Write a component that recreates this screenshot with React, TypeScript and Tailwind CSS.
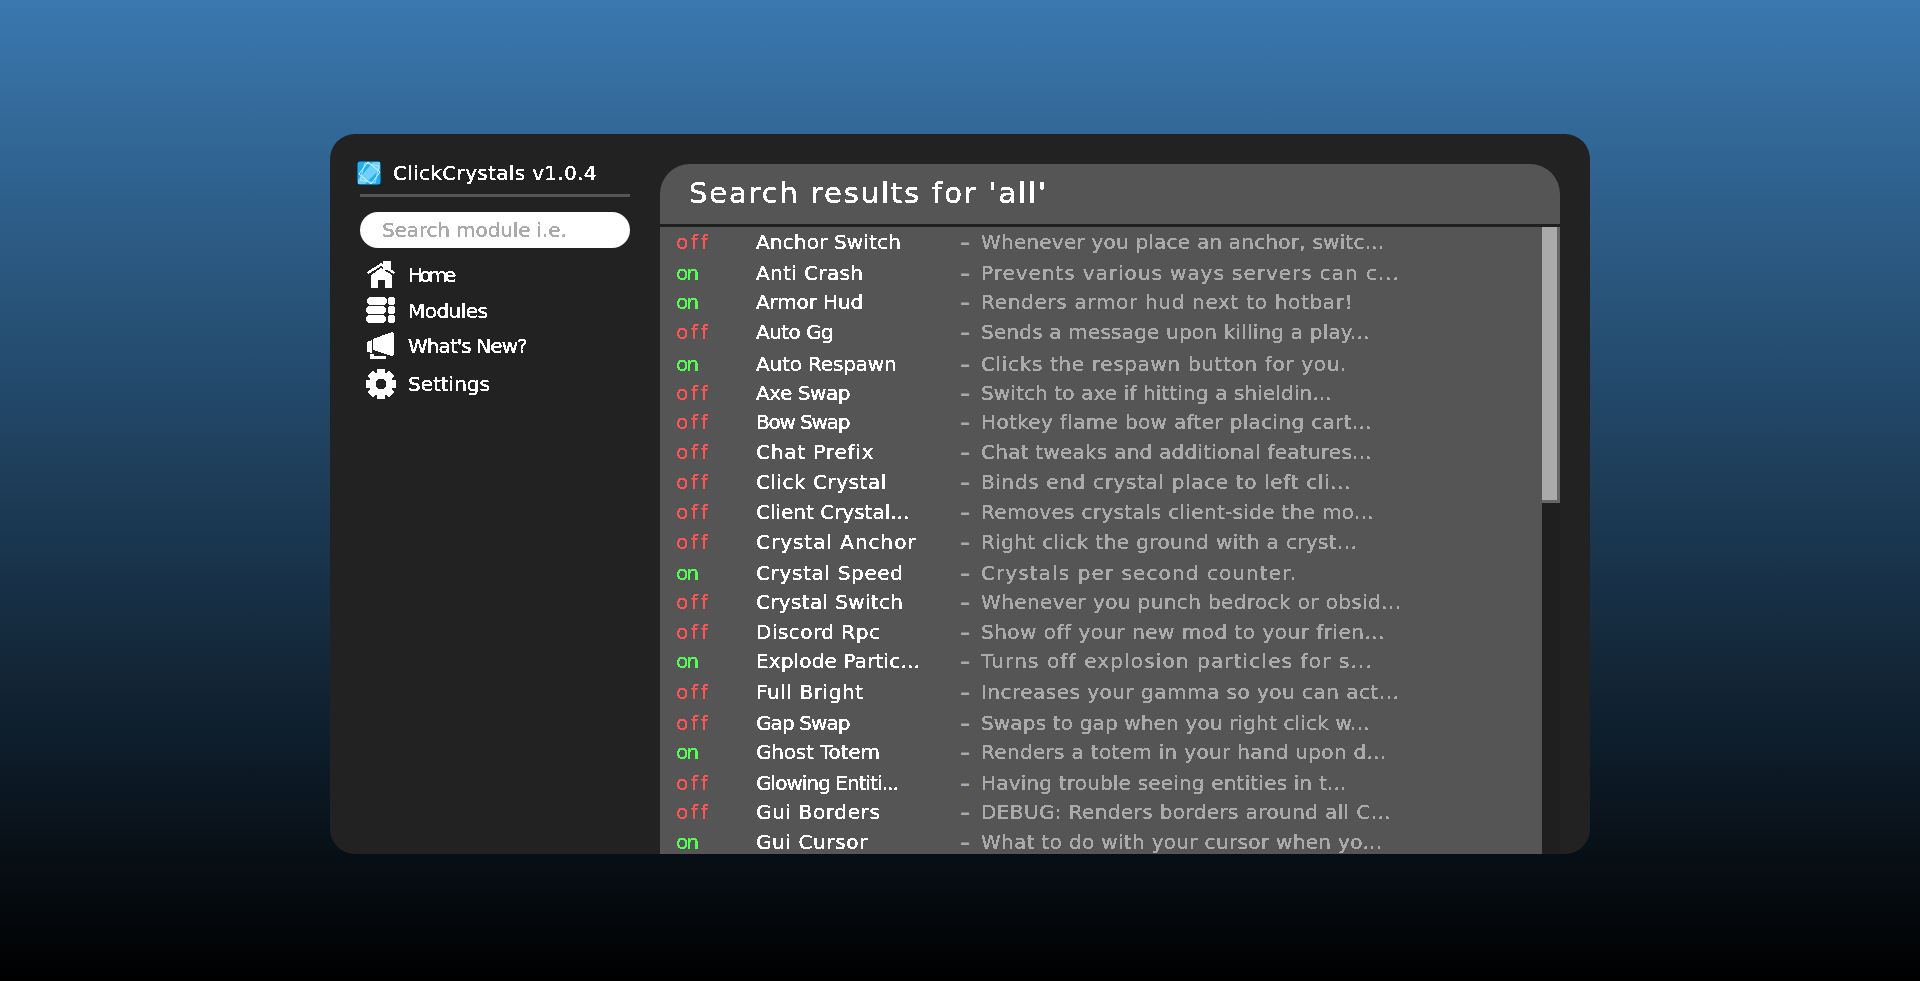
import React from "react";

const ctx = document.createElement("canvas").getContext("2d") as CanvasRenderingContext2D;

function advance(s: string) {
  let sum = 0;
  for (const c of s) {
    if ("i!.,:'".includes(c)) sum += 2;
    else if (c === "l") sum += 3;
    else if ("It ".includes(c)) sum += 4;
    else if ("fk".includes(c)) sum += 5;
    else sum += 6;
  }
  return sum;
}

function T({ s, size, scale, className }: { s: string; size: number; scale: number; className: string }) {
  ctx.font = `${size}px "DejaVu Sans"`;
  const measured = ctx.measureText(s).width;
  const target = (advance(s) - 1) * scale;
  const spacing = (target - measured) / Math.max(s.length - 1, 1);
  return (
    <span
      className={`block whitespace-pre [filter:url(#crisp)] ${className}`}
      style={{ letterSpacing: `${spacing}px` }}
    >
      {s}
    </span>
  );
}

const heightClass: Record<number, string> = {
  27: "h-[27px]",
  29: "h-[29px]",
  30: "h-[30px]",
  31: "h-[31px]",
  32: "h-[32px]",
};

const rows: [boolean, string, string, number][] = [
  [false, "Anchor Switch", "Whenever you place an anchor, switc...", 27],
  [true, "Anti Crash", "Prevents various ways servers can c...", 31],
  [true, "Armor Hud", "Renders armor hud next to hotbar!", 29],
  [false, "Auto Gg", "Sends a message upon killing a play...", 30],
  [true, "Auto Respawn", "Clicks the respawn button for you.", 32],
  [false, "Axe Swap", "Switch to axe if hitting a shieldin...", 29],
  [false, "Bow Swap", "Hotkey flame bow after placing cart...", 29],
  [false, "Chat Prefix", "Chat tweaks and additional features...", 30],
  [false, "Click Crystal", "Binds end crystal place to left cli...", 30],
  [false, "Client Crystal...", "Removes crystals client-side the mo...", 30],
  [false, "Crystal Anchor", "Right click the ground with a cryst...", 30],
  [true, "Crystal Speed", "Crystals per second counter.", 31],
  [false, "Crystal Switch", "Whenever you punch bedrock or obsid...", 29],
  [false, "Discord Rpc", "Show off your new mod to your frien...", 30],
  [true, "Explode Partic...", "Turns off explosion particles for s...", 29],
  [false, "Full Bright", "Increases your gamma so you can act...", 31],
  [false, "Gap Swap", "Swaps to gap when you right click w...", 31],
  [true, "Ghost Totem", "Renders a totem in your hand upon d...", 29],
  [false, "Glowing Entiti...", "Having trouble seeing entities in t...", 31],
  [false, "Gui Borders", "DEBUG: Renders borders around all C...", 29],
  [true, "Gui Cursor", "What to do with your cursor when yo...", 30],
];

function Logo() {
  return (
    <svg width="26" height="26" viewBox="0 0 26 26" className="shrink-0">
      <rect x="0.5" y="0.5" width="25" height="25" rx="3" fill="#0b2a3a" />
      <rect x="1.5" y="1.5" width="23" height="23" rx="2.5" fill="#22aef2" />
      <path d="M17 2 L24 2 L24 9 L9 24 L2 24 L2 20 Z" fill="#6fd0fb" />
      <path d="M12 2 L24 12 L15 24 L3 14 Z" fill="none" stroke="#e4f7ff" strokeWidth="1" />
      <path d="M9 3 L23 6 L19 23 L4 20 Z" fill="none" stroke="#bfeeff" strokeWidth="0.8" />
    </svg>
  );
}

function HomeIcon() {
  return (
    <svg width="30" height="30" viewBox="0 0 30 30" fill="#fff" shapeRendering="crispEdges">
      <rect x="17" y="1" width="8" height="9" />
      <path d="M15 3 L29 12 L27.5 14 L15 6 L2.5 14 L1 12 Z" />
      <path d="M5 15 L15 8 L26 15 L26 28 L19 28 L19 20 L12 20 L12 28 L5 28 Z" />
    </svg>
  );
}

function ModulesIcon() {
  return (
    <svg width="30" height="30" viewBox="0 0 30 30" fill="#fff" shapeRendering="crispEdges">
      <rect x="1" y="1" width="20" height="8" rx="4" />
      <rect x="0" y="10" width="20" height="8" rx="4" />
      <rect x="0" y="19" width="20" height="8" rx="4" />
      <circle cx="25.5" cy="5" r="4" />
      <circle cx="25.5" cy="14" r="4" />
      <circle cx="25.5" cy="23" r="4" />
    </svg>
  );
}

function MegaphoneIcon() {
  return (
    <svg width="30" height="30" viewBox="0 0 30 30" fill="#fff" shapeRendering="crispEdges">
      <path d="M1 11 L6 9 L6 22 L1 21 Z" />
      <path d="M7 8 L26 1 L28 3 L28 24 L26 25 L7 19 Z" />
      <path d="M4 23 L8 23 L8 25 L20 25 L20 28 L4 28 Z" />
    </svg>
  );
}

function GearIcon() {
  const teeth = [0, 45, 90, 135, 180, 225, 270, 315];
  return (
    <svg width="30" height="30" viewBox="0 0 30 30" fill="#fff" shapeRendering="crispEdges">
      {teeth.map((a) => (
        <rect key={a} x="11" y="0" width="8" height="8" transform={`rotate(${a} 15 15)`} />
      ))}
      <circle cx="15" cy="15" r="8.5" fill="none" stroke="#fff" strokeWidth="6" />
    </svg>
  );
}

const nav: [React.ReactNode, string, string][] = [
  [<HomeIcon />, "Home", "mt-[12px]"],
  [<ModulesIcon />, "Modules", "mt-[6px]"],
  [<MegaphoneIcon />, "What's New?", "mt-[5px]"],
  [<GearIcon />, "Settings", "mt-[8px]"],
];

export default function App() {
  return (
    <div className="h-[981px] overflow-hidden bg-linear-to-b/srgb from-[#3a78af] to-black pt-[134px] font-['DejaVu_Sans',sans-serif]">
      <svg className="absolute h-0 w-0" aria-hidden="true">
        <filter id="crisp" colorInterpolationFilters="sRGB" x="-5%" y="-20%" width="110%" height="140%">
          <feComponentTransfer>
            <feFuncA type="discrete" tableValues="0 1 1 1" />
          </feComponentTransfer>
        </filter>
      </svg>
      <div className="mx-auto flex h-[720px] w-[1260px] overflow-hidden rounded-[25px] bg-[#222222]">
        <aside className="w-[330px] shrink-0 pl-[30px] pr-[30px] pt-[26px]">
          <div className="-ml-[4px] flex h-[26px] items-center gap-[11px]">
            <Logo />
            <T s="ClickCrystals v1.0.4" size={20} scale={2.12} className="text-[20px] leading-[24px] text-white" />
          </div>
          <div className="mt-[8px] h-[3px] bg-[#555555]" />
          <div className="mt-[15px] flex h-[36px] items-center rounded-full bg-white pl-[22px]">
            <T s="Search module i.e." size={20} scale={2.1} className="text-[20px] leading-[24px] text-[#aaaaaa]" />
          </div>
          {nav.map(([icon, label, mt]) => (
            <div key={label} className={`flex h-[30px] items-center gap-[12px] pl-[6px] ${mt}`}>
              {icon}
              <T s={label} size={20} scale={2.1} className="text-[20px] leading-[24px] text-white" />
            </div>
          ))}
        </aside>
        <main className="mt-[30px] flex w-[900px] shrink-0 flex-col overflow-hidden rounded-t-[30px]">
          <header className="flex h-[60px] shrink-0 items-end bg-[#555555] pb-[14px] pl-[29px]">
            <T s="Search results for 'all'" size={29} scale={3.05} className="text-[29px] leading-[34px] text-white" />
          </header>
          <div className="h-[3px] shrink-0 bg-[#1f1f1f]" />
          <div className="flex min-h-0 flex-1">
            <div className="w-[882px] shrink-0 overflow-hidden bg-[#555555]">
              {rows.map(([on, name, desc, h]) => (
                <div key={name} className={`flex items-end ${heightClass[h]}`}>
                  <div className="w-[96px] shrink-0 pl-[16px]">
                    <T
                      s={on ? "on" : "off"}
                      size={20}
                      scale={2.1}
                      className={`text-[20px] leading-[24px] ${on ? "text-[#55ff55]" : "text-[#ff5555]"}`}
                    />
                  </div>
                  <div className="w-[204px] shrink-0">
                    <T s={name} size={20} scale={2.1} className="text-[20px] leading-[24px] text-white" />
                  </div>
                  <div className="w-[21px] shrink-0 text-[20px] font-bold leading-[24px] text-[#aaaaaa]">–</div>
                  <T s={desc} size={20} scale={2.1} className="text-[20px] leading-[24px] text-[#aaaaaa]" />
                </div>
              ))}
            </div>
            <div className="w-[18px] shrink-0 bg-[#1f1f1f]">
              <div className="h-[276px] bg-[#666666] pb-[3px] pr-[3px]">
                <div className="h-full bg-[#aaaaaa]" />
              </div>
            </div>
          </div>
        </main>
      </div>
    </div>
  );
}
